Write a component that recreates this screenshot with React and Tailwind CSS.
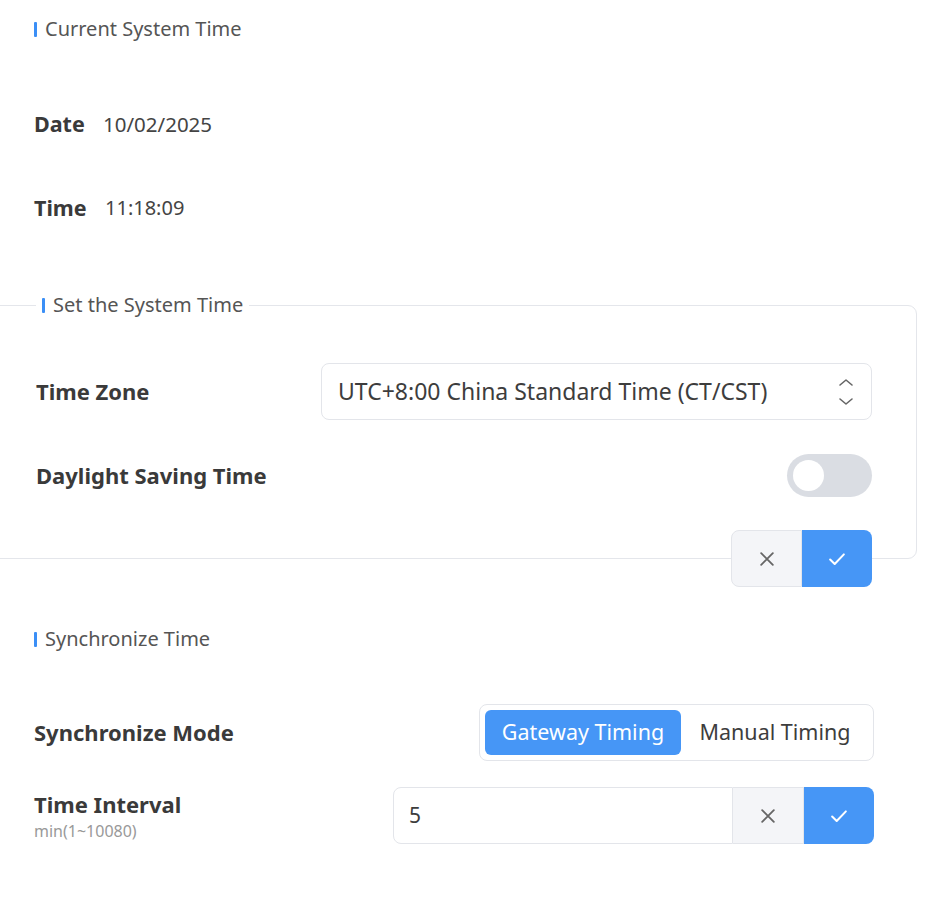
import React, { useState } from 'react';

const font = { fontFamily: '"Noto Sans", "Open Sans", sans-serif' };

const SectionTitle = ({ children }) => (
  <div className="flex items-center gap-[8px]">
    <span className="w-[3px] h-[15px] bg-[#3b8ff6] rounded-[1px]"></span>
    <span className="text-[20px] text-[#555] leading-none">{children}</span>
  </div>
);

const CheckIcon = () => (
  <svg width="22" height="22" viewBox="0 0 24 24" fill="none" stroke="white" strokeWidth="2.2" strokeLinecap="round" strokeLinejoin="round">
    <path d="M4.5 12.5l5 5L19.5 7" />
  </svg>
);

const XIcon = () => (
  <svg width="20" height="20" viewBox="0 0 24 24" fill="none" stroke="#666" strokeWidth="2.2" strokeLinecap="round">
    <path d="M5 5l14 14M19 5L5 19" />
  </svg>
);

const ConfirmButtons = ({ attached }) => (
  <div className="flex h-[57px]">
    <button className={`w-[71px] h-full flex items-center justify-center bg-[#f4f5f8] border border-[#e3e5ea] ${attached ? 'border-l-0' : 'rounded-l-[8px]'}`}>
      <XIcon />
    </button>
    <button className="w-[70px] h-full flex items-center justify-center bg-[#4696f6] rounded-r-[8px]">
      <CheckIcon />
    </button>
  </div>
);

export default function App() {
  const [dst, setDst] = useState(false);
  const [mode, setMode] = useState('gateway');

  return (
    <div className="w-[930px] h-[918px] bg-white overflow-hidden text-[#333]" style={font}>
      <div className="pl-[34px] pt-[19px]">
        <SectionTitle>Current System Time</SectionTitle>
        <div className="mt-[70px] flex items-center h-[30px]">
          <span className="text-[21.5px] font-bold text-[#3a3a3a] w-[69px]">Date</span>
          <span className="text-[20.5px] text-[#444]">10/02/2025</span>
        </div>
        <div className="mt-[54px] flex items-center h-[30px]">
          <span className="text-[21.5px] font-bold text-[#3a3a3a] w-[71px]">Time</span>
          <span className="text-[20px] text-[#444]">11:18:09</span>
        </div>
      </div>

      <fieldset className="mt-[72px] ml-[-10px] w-[927px] border border-[#e4e6eb] rounded-r-[9px] pl-[45px] pr-[44px] pb-0">
        <legend className="px-[6px]">
          <SectionTitle>Set the System Time</SectionTitle>
        </legend>
        <div className="mt-[48px] flex items-center justify-between">
          <span className="text-[22px] font-bold text-[#3a3a3a]">Time Zone</span>
          <div className="w-[551px] h-[57px] border border-[#e3e5ea] rounded-[8px] flex items-center justify-between pl-[16px] pr-[16px]">
            <span className="text-[23px] text-[#3d3d3d]">UTC+8:00 China Standard Time (CT/CST)</span>
            <svg width="18" height="30" viewBox="0 0 18 30" fill="none" stroke="#666" strokeWidth="1.6" strokeLinecap="round" strokeLinejoin="round">
              <path d="M3 8l6-5 6 5M3 22l6 5 6-5" />
            </svg>
          </div>
        </div>
        <div className="mt-[34px] flex items-center justify-between">
          <span className="text-[22px] font-bold text-[#3a3a3a]">Daylight Saving Time</span>
          <button
            onClick={() => setDst(!dst)}
            className={`w-[85px] h-[43px] rounded-full flex items-center px-[6px] ${dst ? 'bg-[#4696f6] justify-end' : 'bg-[#dadde3] justify-start'}`}
          >
            <span className="w-[31px] h-[31px] rounded-full bg-white"></span>
          </button>
        </div>
        <div className="mt-[33px] mb-[-29px] flex justify-end">
          <ConfirmButtons />
        </div>
      </fieldset>

      <div className="pl-[34px] pr-[56px] mt-[70px]">
        <SectionTitle>Synchronize Time</SectionTitle>
        <div className="mt-[55px] flex items-center justify-between">
          <span className="text-[22px] font-bold text-[#3a3a3a]">Synchronize Mode</span>
          <div className="w-[395px] h-[57px] border border-[#e3e5ea] rounded-[8px] flex items-center p-[5px] gap-[1px]">
            <button
              onClick={() => setMode('gateway')}
              className={`w-[196px] h-[45px] rounded-[6px] text-[21.5px] ${mode === 'gateway' ? 'bg-[#4696f6] text-white' : 'text-[#3d3d3d]'}`}
            >
              Gateway Timing
            </button>
            <button
              onClick={() => setMode('manual')}
              className={`flex-1 h-[45px] rounded-[6px] text-[21.5px] ${mode === 'manual' ? 'bg-[#4696f6] text-white' : 'text-[#3d3d3d]'}`}
            >
              Manual Timing
            </button>
          </div>
        </div>
        <div className="mt-[26px] flex items-start justify-between">
          <div className="flex flex-col pt-[3px]">
            <span className="text-[22px] font-bold text-[#3a3a3a] leading-[28px]">Time Interval</span>
            <span className="text-[16px] text-[#999] leading-[20px] mt-[3px]">min(1~10080)</span>
          </div>
          <div className="flex">
            <div className="w-[340px] h-[57px] border border-[#e3e5ea] rounded-l-[8px] flex items-center pl-[15px]">
              <span className="text-[21px] text-[#3d3d3d]">5</span>
            </div>
            <ConfirmButtons attached />
          </div>
        </div>
      </div>
    </div>
  );
}
